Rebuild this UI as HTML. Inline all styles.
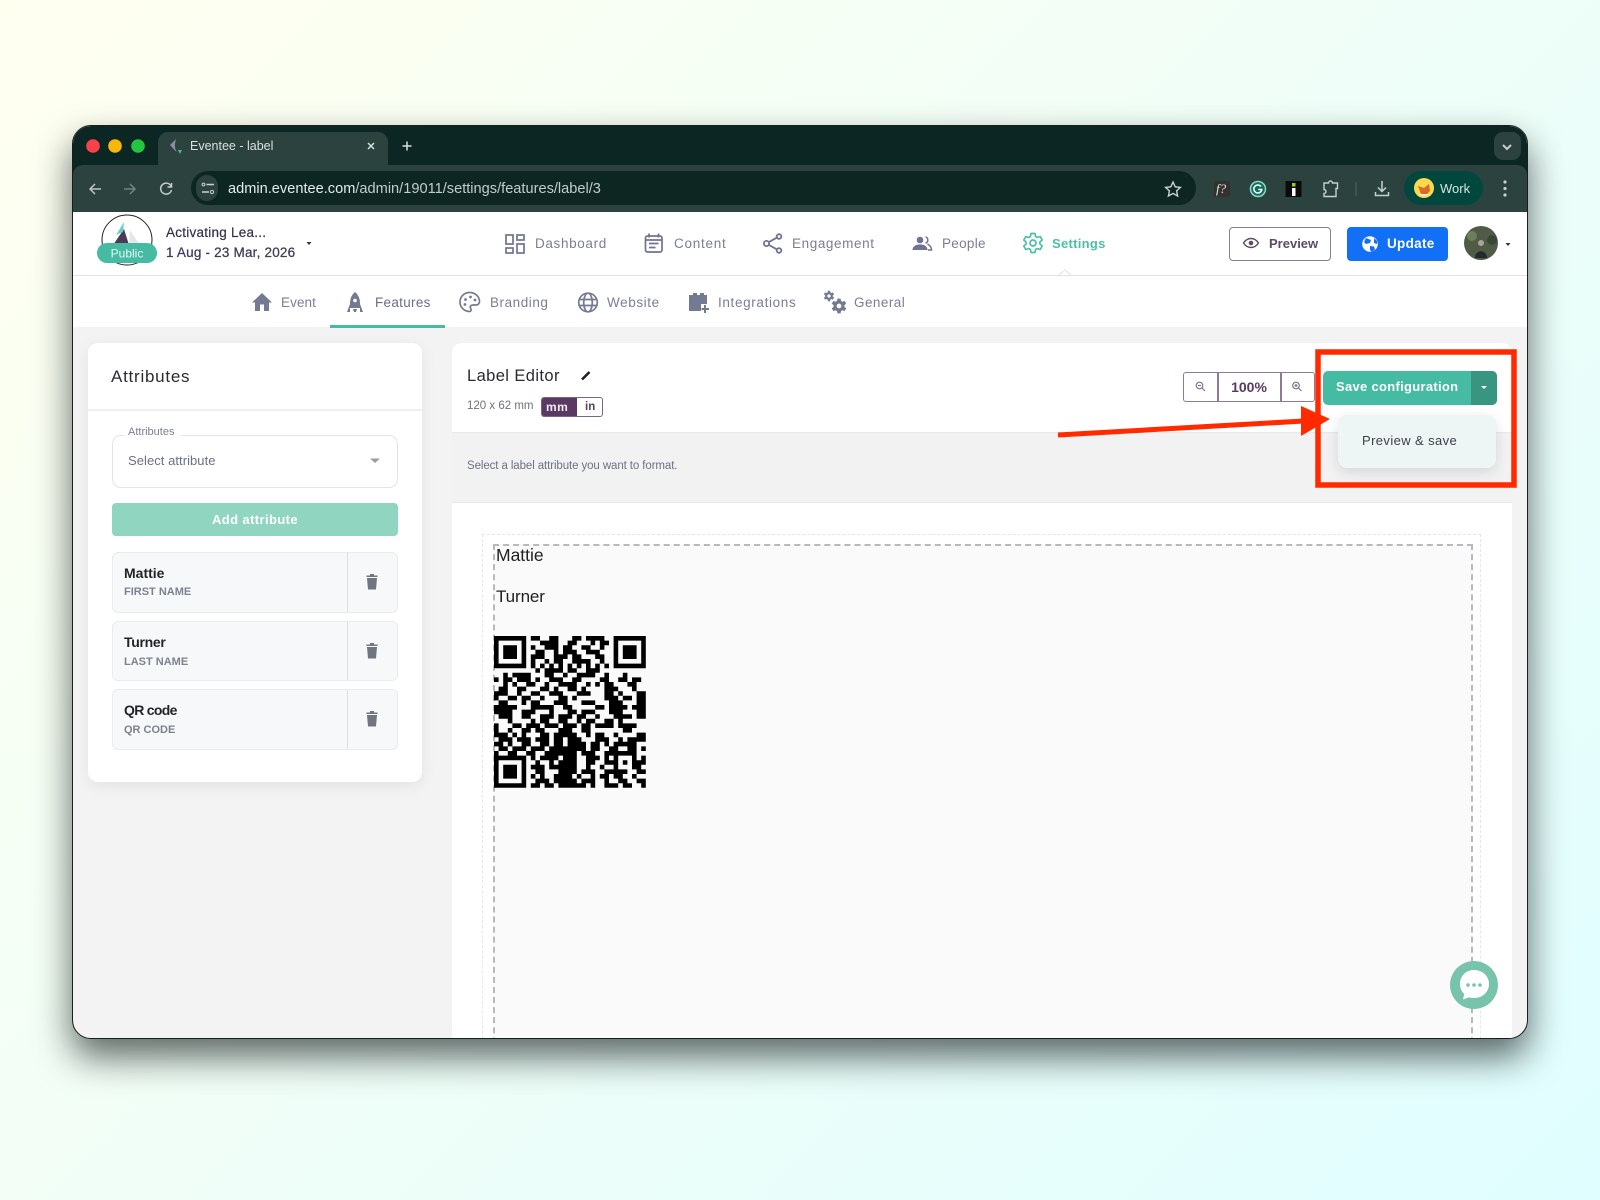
<!DOCTYPE html>
<html>
<head>
<meta charset="utf-8">
<title>Eventee - label</title>
<style>
html,body{margin:0;padding:0;width:1600px;height:1200px;overflow:hidden}
body{position:relative;background:linear-gradient(135deg,#fffff0 0%,#e0feff 100%);font-family:"Liberation Sans",sans-serif}
.win{position:absolute;left:72px;top:125px;width:1454px;height:912px;border:1px solid #1c1c1c;border-radius:19px;overflow:hidden;box-shadow:0 18px 36px rgba(0,10,10,.62);background:#f3f3f3}
.in{position:absolute;left:-73px;top:-126px;width:1600px;height:1200px}
.b{position:absolute;box-sizing:border-box}
.t{position:absolute;white-space:nowrap;line-height:20px;height:20px}
.nav{color:#7b7e96;font-size:13.5px;letter-spacing:.3px}
.row{position:absolute;left:112px;width:286px;background:#f7f8fa;border:1px solid #e9ebef;border-radius:6px;box-sizing:border-box}
.row i{position:absolute;left:234px;top:0;bottom:0;width:1px;background:#dcdfe3}
.nm{color:#212529;font-size:14px;font-weight:bold;left:124px}
.sb{color:#7c8290;font-size:11px;font-weight:bold;letter-spacing:0;left:124px}
svg{position:absolute;left:0;top:0}
</style>
</head>
<body>
<div class="win"><div class="in">
  <!-- browser chrome -->
  <div class="b" style="left:73px;top:125px;width:1454px;height:60px;background:#0c2723"></div>
  <div class="b" style="left:73px;top:165px;width:1454px;height:47px;background:#2c423e;border-radius:10px 10px 0 0"></div>
  <div class="b" style="left:158px;top:132px;width:230px;height:34px;background:#2c423e;border-radius:10px 10px 0 0"></div>
  <div class="b" style="left:191px;top:171px;width:1005px;height:34px;background:#0d2622;border-radius:17px"></div>
  <div class="b" style="left:196px;top:175px;width:22px;height:26px;background:#2c423e;border-radius:11px"></div>
  <div class="b" style="left:1494px;top:132px;width:27px;height:28px;background:#2c423e;border-radius:9px"></div>
  <div class="b" style="left:1404px;top:171px;width:79px;height:34px;background:#01473e;border-radius:17px"></div>
  <div class="t" style="left:190px;top:136px;color:#d9e0de;font-size:12.5px">Eventee - label</div>
  <div class="t" style="left:228px;top:179px;color:#e6ecea;font-size:14.6px"><span>admin.eventee.com</span><span style="color:#c3cdca">/admin/19011/settings/features/label/3</span></div>
  <div class="t" style="left:1440px;top:179px;color:#d6e4e0;font-size:13px">Work</div>

  <!-- app header -->
  <div class="b" style="left:73px;top:212px;width:1454px;height:115px;background:#fff"></div>
  <div class="b" style="left:73px;top:275px;width:1454px;height:1px;background:#e4e2e8"></div>
  <div class="b" style="left:330px;top:325px;width:115px;height:3px;background:#44bba2"></div>
  <div class="t" style="left:166px;top:223px;color:#36304a;font-size:13.5px;letter-spacing:.25px;-webkit-text-stroke:.2px #36304a">Activating Lea...</div>
  <div class="t" style="left:166px;top:243px;color:#3f3b57;font-size:13.5px;letter-spacing:.2px;-webkit-text-stroke:.25px #3f3b57">1 Aug - 23 Mar, 2026</div>
  <div class="t nav" style="left:535px;top:234px;letter-spacing:.65px">Dashboard</div>
  <div class="t nav" style="left:674px;top:234px;letter-spacing:.75px">Content</div>
  <div class="t nav" style="left:792px;top:234px;letter-spacing:.6px">Engagement</div>
  <div class="t nav" style="left:942px;top:234px">People</div>
  <div class="t nav" style="left:1052px;top:234px;color:#4cc0a6;font-weight:bold;font-size:13px">Settings</div>
  <div class="b" style="left:1229px;top:227px;width:102px;height:34px;border:1.5px solid #8d7a96;border-radius:4px;background:#fff"></div>
  <div class="t" style="left:1269px;top:234px;color:#5d4a69;font-size:13px;font-weight:bold">Preview</div>
  <div class="b" style="left:1347px;top:227px;width:101px;height:34px;background:#1170f5;border-radius:4px"></div>
  <div class="t" style="left:1387px;top:234px;color:#fff;font-size:13.5px;font-weight:bold;letter-spacing:.3px">Update</div>

  <!-- subnav -->
  <div class="t nav" style="left:281px;top:293px;letter-spacing:.1px">Event</div>
  <div class="t nav" style="left:375px;top:293px;color:#6b6e88">Features</div>
  <div class="t nav" style="left:490px;top:293px;letter-spacing:.55px">Branding</div>
  <div class="t nav" style="left:607px;top:293px;letter-spacing:.6px">Website</div>
  <div class="t nav" style="left:718px;top:293px;letter-spacing:.65px">Integrations</div>
  <div class="t nav" style="left:854px;top:293px;letter-spacing:.45px">General</div>

  <!-- attributes card -->
  <div class="b" style="left:88px;top:343px;width:334px;height:439px;background:#fff;border-radius:10px;box-shadow:0 4px 16px rgba(0,0,0,.07)"></div>
  <div class="b" style="left:88px;top:409px;width:334px;height:2px;background:#efeff1"></div>
  <div class="t" style="left:111px;top:367px;color:#2b2b33;font-size:17px;letter-spacing:.75px">Attributes</div>
  <div class="b" style="left:112px;top:435px;width:286px;height:53px;border:1.5px solid #e4e4e8;border-radius:9px"></div>
  <div class="b" style="left:124px;top:430px;width:57px;height:8px;background:#fff"></div>
  <div class="t" style="left:128px;top:422px;color:#7d8094;font-size:11px">Attributes</div>
  <div class="t" style="left:128px;top:451px;color:#6c7089;font-size:13px;letter-spacing:.05px">Select attribute</div>
  <div class="b" style="left:112px;top:503px;width:286px;height:33px;background:#8fd5c0;border-radius:4px"></div>
  <div class="t" style="left:112px;width:286px;text-align:center;top:510px;color:#fff;font-size:13px;font-weight:bold;letter-spacing:.4px">Add attribute</div>
  <div class="row" style="top:552px;height:61px"><i></i></div>
  <div class="row" style="top:621px;height:60px"><i></i></div>
  <div class="row" style="top:689px;height:61px"><i></i></div>
  <div class="t nm" style="top:563px">Mattie</div>
  <div class="t sb" style="top:582px">FIRST NAME</div>
  <div class="t nm" style="top:632px;letter-spacing:-.3px">Turner</div>
  <div class="t sb" style="top:652px">LAST NAME</div>
  <div class="t nm" style="top:700px;letter-spacing:-.7px">QR code</div>
  <div class="t sb" style="top:720px">QR CODE</div>

  <!-- editor card -->
  <div class="b" style="left:452px;top:343px;width:1060px;height:720px;background:#fff;border-radius:10px 10px 0 0"></div>
  <div class="b" style="left:452px;top:432px;width:1060px;height:71px;background:#f2f2f3;border-top:1px solid #e9e9eb;border-bottom:1px solid #e9e9eb"></div>
  <div class="t" style="left:467px;top:366px;color:#2b2b33;font-size:16.5px;letter-spacing:.4px">Label Editor</div>
  <div class="t" style="left:467px;top:396px;color:#6d7280;font-size:11.5px">120 x 62 mm</div>
  <div class="b" style="left:541px;top:397px;width:62px;height:20px;border:1px solid #7d6486;border-radius:3px;background:#fff;overflow:hidden"><div class="b" style="left:0;top:0;width:35px;height:20px;background:#5a3a62"></div></div>
  <div class="t" style="left:546px;top:397px;color:#f0edf2;font-size:12px;font-weight:bold;letter-spacing:.5px">mm</div>
  <div class="t" style="left:585px;top:397px;color:#5a3a62;font-size:11.5px;font-weight:bold">in</div>
  <div class="t" style="left:467px;top:456px;color:#6d7280;font-size:11.5px;letter-spacing:-.1px">Select a label attribute you want to format.</div>

  <div class="b" style="left:1183px;top:372px;width:132px;height:30px;border:1.5px solid #8d7a96;border-radius:3px;background:#fff"></div>
  <div class="b" style="left:1217px;top:372px;width:1.5px;height:30px;background:#8d7a96"></div>
  <div class="b" style="left:1280px;top:372px;width:1.5px;height:30px;background:#8d7a96"></div>
  <div class="t" style="left:1218px;width:62px;text-align:center;top:377px;color:#5a3a62;font-size:14px;font-weight:bold">100%</div>

  <div class="b" style="left:1323px;top:371px;width:174px;height:34px;background:#44bba2;border-radius:5px;overflow:hidden"><div class="b" style="left:148px;top:0;width:26px;height:34px;background:#389680"></div></div>
  <div class="t" style="left:1336px;top:377px;color:#fff;font-size:13px;font-weight:bold;letter-spacing:.3px">Save configuration</div>
  <div class="b" style="left:1338px;top:415px;width:158px;height:53px;background:#eef6f5;border-radius:9px;box-shadow:0 4px 14px rgba(0,0,0,.12)"></div>
  <div class="t" style="left:1362px;top:431px;color:#3c3f4a;font-size:13px;letter-spacing:.4px">Preview &amp; save</div>

  <!-- canvas -->
  <div class="b" style="left:482px;top:534px;width:999px;height:600px;border:1px dashed #e6e6e8"></div>
  <div class="b" style="left:493px;top:544px;width:980px;height:600px;border:2.5px dashed #b9b9bd;background:#fafafa"></div>
  <div class="t" style="left:496px;top:545px;color:#212121;font-size:17.5px">Mattie</div>
  <div class="t" style="left:496px;top:587px;color:#212121;font-size:17px;letter-spacing:-.1px">Turner</div>

  <!-- icons overlay -->
  <svg width="1600" height="1200" viewBox="0 0 1600 1200">
    <!-- traffic lights -->
    <circle cx="93" cy="146" r="6.800" fill="#f9414a"/><circle cx="115" cy="146" r="6.800" fill="#f8b808"/><circle cx="138" cy="146" r="6.800" fill="#22c63f"/>
    <!-- favicon -->
    <path d="M176 139l-6 6c2 2 4 5 7 7-2-3-3-6-1-13z" fill="#8a8fa0"/><path d="M178 150l4 0-2 4z" fill="#44bba2"/>
    <!-- tab close/plus -->
    <path d="M368 143l6 6M374 143l-6 6" stroke="#d6dfdc" stroke-width="1.500"/>
    <path d="M407 141.500v9M402.500 146h9" stroke="#d6dfdc" stroke-width="1.500"/>
    <!-- chevron -->
    <path d="M1503 145l4 4 4-4" stroke="#c4d2cf" stroke-width="2" fill="none"/>
    <!-- nav arrows -->
    <path d="M101 189H90M95 184l-5 5 5 5" stroke="#b9c6c3" stroke-width="1.500" fill="none"/>
    <path d="M124 189h11M130 184l5 5-5 5" stroke="#6f827e" stroke-width="1.500" fill="none"/>
    <path d="M171 186a5.500 5.500 0 1 0 .5 4M171.500 183v4h-4" stroke="#c3ceca" stroke-width="1.500" fill="none"/>
    <!-- site settings icon -->
    <path d="M206.500 184.500h7.500M202 192h7" stroke="#c9d4d1" stroke-width="1.500"/><circle cx="203.500" cy="184.500" r="1.400" stroke="#c9d4d1" fill="none"/><circle cx="212" cy="192" r="1.600" stroke="#c9d4d1" fill="none"/>
    <!-- star -->
    <path d="M1173 182l2.200 4.800 5.200.6-3.800 3.500 1 5.100-4.600-2.600-4.600 2.600 1-5.100-3.800-3.500 5.200-.6z" stroke="#c8d3d0" stroke-width="1.400" fill="none"/>
    <!-- extensions -->
    <rect x="1214" y="181" width="16" height="16" rx="2" fill="#33322f"/>
    <text x="1216" y="193" font-family="Liberation Serif,serif" font-style="italic" font-size="13" fill="#e6e6e6">f?</text>
    <circle cx="1258" cy="189" r="7.500" stroke="#8fd8c4" stroke-width="1.500" fill="#0d6e5c"/><path d="M1261 186.500a4 4 0 1 0 .8 3h-3.500" stroke="#fff" stroke-width="1.500" fill="none"/>
    <rect x="1285.500" y="181" width="16" height="16" fill="#0b0b0b"/><rect x="1292" y="188" width="3.500" height="8" fill="#fff"/><rect x="1292" y="183" width="3.500" height="3.500" fill="#8fd11f"/>
    <path d="M1324 183h4.500a2 2 0 0 1 4 0h5v5.500h-1.500v8h-12v-3a2 2 0 0 0 0-4z" stroke="#c4d2cf" stroke-width="1.400" fill="none"/>
    <path d="M1356 182v14" stroke="#4f6662" stroke-width="1"/>
    <path d="M1382 181v10M1378 187.500l4 4 4-4M1375.500 192v3.500h13V192" stroke="#c4d2cf" stroke-width="1.500" fill="none"/>
    <circle cx="1424" cy="188" r="10" fill="#fbd94e"/><path d="M1418 186l6 2 5-4 1 7-3 3h-6z" fill="#dc6a25"/><path d="M1418 194a10 10 0 0 0 12 0z" fill="#f7f3da"/>
    <circle cx="1505" cy="182" r="1.600" fill="#c4d2cf"/><circle cx="1505" cy="188.500" r="1.600" fill="#c4d2cf"/><circle cx="1505" cy="195" r="1.600" fill="#c4d2cf"/>

    <!-- logo -->
    <circle cx="127" cy="240" r="25" fill="#fff" stroke="#222" stroke-width="1"/>
    <path d="M129 244l1-14 9 14z" fill="#e6e5e8"/><path d="M113 245l11-16 5 16z" fill="#4a3a55"/><path d="M116 235l8-13-1 10z" fill="#62d3bc"/>
    <rect x="97" y="243" width="60" height="20" rx="10" fill="#44bba2"/>
    <text x="127" y="257.500" text-anchor="middle" font-family="Liberation Sans,sans-serif" font-size="12" fill="#e9f8f4">Public</text>
    <path d="M306.500 242h5l-2.500 3z" fill="#333"/>

    <!-- dashboard -->
    <g fill="none" stroke="#6f7390" stroke-width="1.700"><rect x="506" y="235" width="7" height="9"/><rect x="517" y="235" width="7" height="5"/><rect x="506" y="248" width="7" height="5"/><rect x="517" y="244" width="7" height="9"/></g>
    <!-- content -->
    <g fill="none" stroke="#6f7390" stroke-width="1.700"><rect x="645.500" y="236" width="16.500" height="16" rx="2"/><path d="M649 233.500v4M658.500 233.500v4M645.500 240h16.500M649 243.500h9.500M649 247.500h6.500"/></g>
    <!-- engagement -->
    <g fill="none" stroke="#6f7390" stroke-width="1.800"><circle cx="779" cy="236.500" r="2.300"/><circle cx="779" cy="250.500" r="2.300"/><circle cx="766.500" cy="243.500" r="2.600"/><path d="M769 242l7.800-4.300M769 245l7.800 4.300"/></g>
    <!-- people -->
    <circle cx="920" cy="240" r="3.300" fill="#6f7390"/><path d="M912.500 250c0-7.500 15-7.500 15 0z" fill="#6f7390"/>
    <path d="M925.500 236.800a3.300 3.300 0 0 1 0 6.300M928 250h3.500c0-3.500-2-5-4-6" stroke="#6f7390" stroke-width="1.500" fill="none"/>
    <!-- settings gear -->
    <g transform="translate(1033,243)" fill="none" stroke="#4cc0a6" stroke-width="1.700" stroke-linejoin="round"><path d="M-2.600-6.500L-2-9.500H2L2.600-6.500L4.300-5.500L7.200-6.500L9.200-3L6.900-1V1L9.200 3L7.200 6.500L4.300 5.500L2.600 6.500L2 9.500H-2L-2.600 6.500L-4.300 5.500L-7.200 6.500L-9.200 3L-6.900 1V-1L-9.200-3L-7.200-6.500L-4.300-5.500z"/><circle r="3"/></g>
    <!-- header caret -->
    <path d="M1059 275l6-5 6 5" fill="#fff" stroke="#e0dee5" stroke-width="1"/>
    <!-- preview eye -->
    <path d="M1243.500 243c4-6 11-6 15 0-4 6-11 6-15 0z" fill="none" stroke="#5d4a69" stroke-width="1.400"/><circle cx="1251" cy="243" r="2.300" fill="#5d4a69"/>
    <!-- update globe -->
    <circle cx="1370" cy="244" r="7.800" fill="#fff"/><path d="M1366 238l5 2-1 3-4 1-2-2zM1370 246l4 .5 1 3-3 2.500-2-2zM1374 238l3 3 0 3-3-1z" fill="#1170f5"/>
    <!-- avatar -->
    <circle cx="1481" cy="243" r="17" fill="#4f5b45"/><circle cx="1472" cy="236" r="5" fill="#6c7f5c"/><circle cx="1492" cy="240" r="5" fill="#39453a"/><circle cx="1481" cy="243" r="3" fill="#a8a69a"/><path d="M1475 258c0-9 12-9 12 0z" fill="#232a2e"/>
    <path d="M1505.500 243h5l-2.500 3z" fill="#333"/>

    <!-- subnav icons -->
    <path d="M262 293l-10 9.500h3v8.500h5v-6.500h4v6.500h5v-8.500h3z" fill="#757a93"/>
    <path d="M355 292c-3.500 3-5 7-5 11v5h10v-5c0-4-1.500-8-5-11z" fill="#757a93"/><circle cx="355" cy="300.500" r="1.800" fill="#fff"/><path d="M350 304l-3 8h3zM360 304l3 8h-3z" fill="#757a93"/><path d="M353 309h4l-1 3h-2z" fill="#757a93"/>
    <path d="M470 292.500a9.500 9.500 0 1 0-1 19c2.500 0 2.500-2 1.500-3.500s.5-3 2.500-3h3c2 0 3.500-1.500 3.500-3.500 0-5-4.500-9-9.500-9z" fill="none" stroke="#757a93" stroke-width="1.700"/><circle cx="465.500" cy="299.500" r="1.400" fill="#757a93"/><circle cx="470.500" cy="297" r="1.400" fill="#757a93"/><circle cx="475" cy="300" r="1.400" fill="#757a93"/><circle cx="465" cy="304.500" r="1.400" fill="#757a93"/>
    <g fill="none" stroke="#757a93" stroke-width="1.700"><circle cx="588" cy="302.500" r="9.300"/><ellipse cx="588" cy="302.500" rx="4.300" ry="9.300"/><path d="M579 299.500h18M579 305.500h18"/></g>
    <path d="M689 295h4v-2h4v2h3v-2h4v2h3v10h-3v6h-15z" fill="#757a93"/><rect x="701" y="304" width="10" height="10" fill="#fff"/><path d="M705 305v8M701.500 309h7.500" stroke="#757a93" stroke-width="2"/>
    <g transform="translate(829,296) scale(.55)" fill="#757a93"><path d="M-2.600-6.500L-2-9.500H2L2.600-6.500L4.300-5.500L7.200-6.500L9.200-3L6.900-1V1L9.200 3L7.200 6.500L4.300 5.500L2.600 6.500L2 9.500H-2L-2.600 6.500L-4.300 5.500L-7.200 6.500L-9.200 3L-6.900 1V-1L-9.200-3L-7.200-6.500L-4.300-5.500z"/><circle r="3" fill="#fff"/></g>
    <g transform="translate(839,306) scale(.78)" fill="#757a93"><path d="M-2.600-6.500L-2-9.500H2L2.600-6.500L4.300-5.500L7.200-6.500L9.200-3L6.900-1V1L9.200 3L7.200 6.500L4.300 5.500L2.600 6.500L2 9.500H-2L-2.600 6.500L-4.300 5.500L-7.200 6.500L-9.200 3L-6.900 1V-1L-9.200-3L-7.200-6.500L-4.300-5.500z"/><circle r="3" fill="#fff"/></g>

    <!-- select arrow -->
    <path d="M370 458.500h10l-5 4.500z" fill="#9b9ba5"/>
    <!-- trash icons -->
    <g fill="#6f7680"><path d="M367 578h10l-1 11.500h-8zM366.500 575.500h11v1.500h-11zM370 574h4v1.500h-4z"/><path d="M367 647h10l-1 11.500h-8zM366.500 644.500h11v1.500h-11zM370 643h4v1.500h-4z"/><path d="M367 715h10l-1 11.500h-8zM366.500 712.500h11v1.500h-11zM370 711h4v1.500h-4z"/></g>
    <!-- pencil -->
    <path d="M582 379.500L589.500 372" stroke="#222" stroke-width="2.600" fill="none"/>
    <!-- zoom icons -->
    <g fill="none" stroke="#85708f" stroke-width="1.200"><circle cx="1199.500" cy="385.500" r="3.300"/><path d="M1202 388l3 3"/><path d="M1198 385.500h3"/><circle cx="1296" cy="385.500" r="3.300"/><path d="M1298.500 388l3 3"/><path d="M1294.500 385.500h3M1296 384v3"/></g>
    <path d="M1481 386h6l-3 3z" fill="#fff"/>

    <!-- QR -->
    <g transform="translate(494,636) scale(4.600)"><path fill="none" stroke="#000" stroke-width="1" d="M0 .5h7M8 .5h2M12 .5h2M17 .5h2M20 .5h4M26 .5h7
    M0 1.500h1M6 1.500h1M10 1.500h4M16 1.500h2M21 1.500h1M23 1.500h2M26 1.500h1M32 1.500h1
    M0 2.500h1M2 2.500h3M6 2.500h1M8 2.500h1M11 2.500h3M15 2.500h2M19 2.500h2M23 2.500h1M26 2.500h1M28 2.500h3M32 2.500h1
    M0 3.500h1M2 3.500h3M6 3.500h1M9 3.500h2M13 3.500h1M15 3.500h3M20 3.500h3M26 3.500h1M28 3.500h3M32 3.500h1
    M0 4.500h1M2 4.500h3M6 4.500h1M8 4.500h3M13 4.500h3M17 4.500h2M22 4.500h2M26 4.500h1M28 4.500h3M32 4.500h1
    M0 5.500h1M6 5.500h1M8 5.500h1M11 5.500h1M13 5.500h2M17 5.500h4M23 5.500h1M26 5.500h1M32 5.500h1
    M0 6.500h7M8 6.500h1M10 6.500h1M12 6.500h1M14 6.500h1M16 6.500h1M18 6.500h1M20 6.500h1M22 6.500h1M24 6.500h1M26 6.500h7
    M9 7.500h1M11 7.500h4M16 7.500h2M20 7.500h3
    M2 8.500h1M4 8.500h4M11 8.500h2M15 8.500h1M18 8.500h4M24 8.500h1M28 8.500h1
    M0 9.500h1M2 9.500h2M5 9.500h3M9 9.500h1M12 9.500h3M17 9.500h2M23 9.500h2M27 9.500h2M30 9.500h2
    M2 10.500h1M4 10.500h1M7 10.500h2M11 10.500h1M14 10.500h4M20 10.500h1M22 10.500h1M24 10.500h2M29 10.500h2
    M1 11.500h2M5 11.500h2M10 11.500h2M13 11.500h1M16 11.500h2M19 11.500h1M24 11.500h3M30 11.500h1
    M0 12.500h3M5 12.500h1M8 12.500h2M12 12.500h3M18 12.500h3M24 12.500h2M27 12.500h1M31 12.500h2
    M0 13.500h1M3 13.500h2M6 13.500h2M10 13.500h1M14 13.500h2M17 13.500h1M24 13.500h3M28 13.500h2M31 13.500h2
    M1 14.500h2M6 14.500h1M8 14.500h2M13 14.500h3M19 14.500h3M25 14.500h3M31 14.500h2
    M0 15.500h5M8 15.500h5M15 15.500h2M22 15.500h2M25 15.500h4M30 15.500h3
    M0 16.500h4M6 16.500h3M12 16.500h1M16 16.500h2M19 16.500h3M25 16.500h3M31 16.500h2
    M1 17.500h3M6 17.500h2M10 17.500h3M14 17.500h3M18 17.500h2M22 17.500h1M26 17.500h4M31 17.500h2
    M3 18.500h1M8 18.500h1M10 18.500h2M14 18.500h2M18 18.500h1M20 18.500h2M24 18.500h2M27 18.500h1
    M0 19.500h1M4 19.500h2M7 19.500h3M11 19.500h3M15 19.500h3M19 19.500h2M22 19.500h4M27 19.500h4
    M0 20.500h1M3 20.500h1M6 20.500h2M9 20.500h2M14 20.500h3M19 20.500h2M28 20.500h2
    M0 21.500h3M4 21.500h1M6 21.500h1M10 21.500h2M13 21.500h5M20 21.500h1M22 21.500h2M26 21.500h1M31 21.500h2
    M1 22.500h3M5 22.500h3M9 22.500h3M13 22.500h2M16 22.500h3M22 22.500h3M27 22.500h1M29 22.500h4
    M0 23.500h2M3 23.500h1M6 23.500h2M10 23.500h2M13 23.500h2M16 23.500h4M21 23.500h2M24 23.500h1M26 23.500h5
    M1 24.500h2M4 24.500h3M8 24.500h3M12 24.500h8M21 24.500h2M25 24.500h2M29 24.500h2M32 24.500h1
    M0 25.500h1M3 25.500h2M7 25.500h2M11 25.500h7M19 25.500h3M24 25.500h7
    M0 26.500h7M8 26.500h1M10 26.500h4M15 26.500h3M20 26.500h3M24 26.500h1M26 26.500h1M30 26.500h1M32 26.500h1
    M0 27.500h1M6 27.500h1M9 27.500h1M12 27.500h1M14 27.500h4M20 27.500h2M24 27.500h3M28 27.500h1M30 27.500h3
    M0 28.500h1M2 28.500h3M6 28.500h1M8 28.500h3M12 28.500h6M20 28.500h1M23 28.500h1M26 28.500h1M30 28.500h2
    M0 29.500h1M2 29.500h3M6 29.500h1M9 29.500h2M14 29.500h4M19 29.500h3M24 29.500h5M31 29.500h2
    M0 30.500h1M2 30.500h3M6 30.500h1M8 30.500h1M10 30.500h1M13 30.500h4M18 30.500h1M21 30.500h1M23 30.500h2M26 30.500h2M30 30.500h1
    M0 31.500h1M6 31.500h1M9 31.500h3M13 31.500h5M19 31.500h3M24 31.500h1M27 31.500h2M31 31.500h2
    M0 32.500h7M8 32.500h2M11 32.500h2M14 32.500h6M21 32.500h1M24 32.500h3M28 32.500h2M32 32.500h1"/></g>

    <!-- chat -->
    <circle cx="1474" cy="985" r="24" fill="#78c3ab"/>
    <path d="M1474 970c8.500 0 15 6 15 14s-6.500 14-15 14c-1.800 0-3.500-.3-5-.8l-6 2.300 1.200-5.500c-2.700-2.600-4.200-6-4.200-10 0-8 6-14 14-14z" fill="#fff"/>
    <circle cx="1468" cy="985" r="1.800" fill="#78c3ab"/><circle cx="1474" cy="985" r="1.800" fill="#78c3ab"/><circle cx="1480" cy="985" r="1.800" fill="#78c3ab"/>

    <!-- red annotation -->
    <rect x="1318" y="352" width="196" height="133" fill="none" stroke="#ff2a00" stroke-width="5.500"/>
    <path d="M1058 435L1304 421" stroke="#ff2a00" stroke-width="5" fill="none"/>
    <path d="M1301 406L1330 419L1301 436z" fill="#ff2a00"/>
  </svg>
</div></div>
</body>
</html>
